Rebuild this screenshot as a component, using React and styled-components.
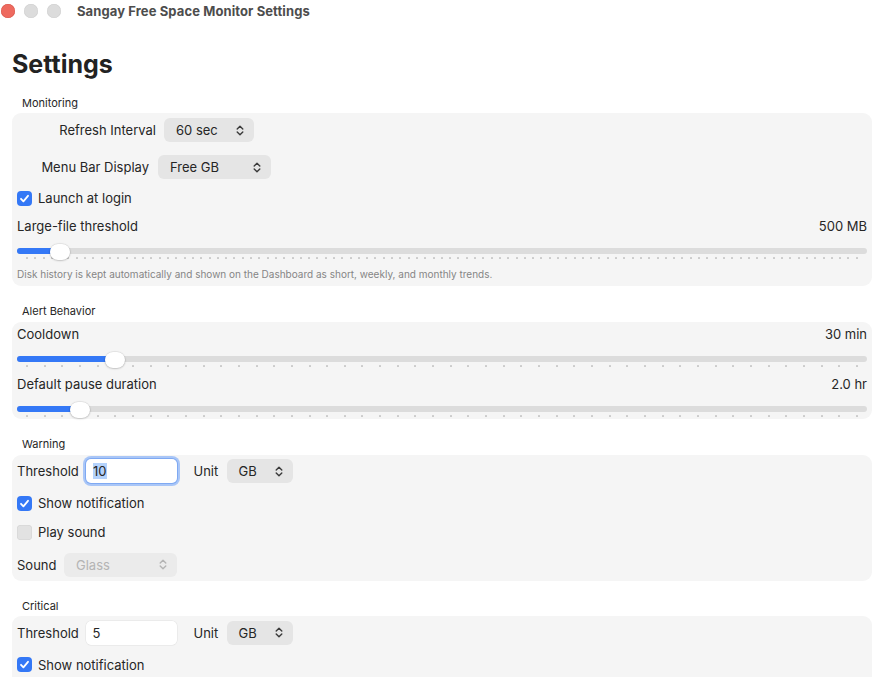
import React from "react";
import styled, { createGlobalStyle } from "styled-components";

const GlobalStyle = createGlobalStyle`
  html, body { margin: 0; padding: 0; background: #ffffff; }
  body {
    font-family: Inter, "Noto Sans", "Liberation Sans", sans-serif;
    color: #262626;
    -webkit-font-smoothing: antialiased;
  }
  * { box-sizing: border-box; }
`;

const Window = styled.div`
  width: 887px;
  height: 677px;
  overflow: hidden;
  background: #ffffff;
  display: flex;
  flex-direction: column;
`;

const TitleBar = styled.div`
  height: 22px;
  flex-shrink: 0;
  display: flex;
  align-items: center;
  padding-left: 1px;
`;

const Lights = styled.div`
  display: flex;
  gap: 9px;
  margin-right: 16px;
`;

const Light = styled.span`
  width: 14px;
  height: 14px;
  border-radius: 50%;
  background: ${(p) => p.$color};
  box-shadow: inset 0 0 0 0.5px ${(p) => p.$edge};
`;

const WindowTitle = styled.div`
  font-size: 13px;
  line-height: 16px;
  font-weight: 700;
  color: #4d4d4d;
  letter-spacing: 0.1px;
`;

const Content = styled.div`
  padding: 0 15px 0 12px;
  display: flex;
  flex-direction: column;
  flex-shrink: 0;
`;

const Heading = styled.h1`
  margin: 26px 0 16.5px;
  font-size: 25px;
  line-height: 32px;
  font-weight: 700;
  color: #222;
`;

const Section = styled.section`
  display: flex;
  flex-direction: column;
  margin-top: ${(p) => (p.$first ? 0 : 19)}px;
`;

const SectionLabel = styled.div`
  font-size: 11px;
  line-height: 13px;
  padding-left: 10px;
  margin-bottom: 3.5px;
  color: #262626;
`;

const Card = styled.div`
  background: #f5f5f5;
  border-radius: 9px;
  padding: ${(p) => p.$pad};
  display: flex;
  flex-direction: column;
`;

const Row = styled.div`
  display: flex;
  align-items: center;
  height: ${(p) => p.$h || 24}px;
  margin-top: ${(p) => p.$mt || 0}px;
  flex-shrink: 0;
`;

const SpreadRow = styled(Row)`
  justify-content: space-between;
`;

const Label = styled.span`
  font-size: 13px;
  line-height: 16px;
  white-space: nowrap;
  color: #262626;
  width: ${(p) => (p.$w ? `${p.$w}px` : "auto")};
  text-align: ${(p) => p.$align || "left"};
  margin-left: ${(p) => p.$ml || 0}px;
  margin-right: ${(p) => p.$mr || 0}px;
  flex-shrink: 0;
`;

const SelectBox = styled.div`
  width: ${(p) => p.$w}px;
  height: 24px;
  border-radius: 6px;
  background: ${(p) => (p.$disabled ? "#ebebeb" : "#e5e5e5")};
  color: ${(p) => (p.$disabled ? "#b4b4b4" : "#262626")};
  font-size: 13px;
  line-height: 16px;
  display: flex;
  align-items: center;
  justify-content: space-between;
  padding: 0 10px 0 12px;
  flex-shrink: 0;
`;

const Chevron = ({ color }) => (
  <svg width="8" height="11" viewBox="0 0 8 11" fill="none">
    <path d="M1.2 4 L4 1.2 L6.8 4" stroke={color} strokeWidth="1.4" strokeLinecap="round" strokeLinejoin="round" />
    <path d="M1.2 7 L4 9.8 L6.8 7" stroke={color} strokeWidth="1.4" strokeLinecap="round" strokeLinejoin="round" />
  </svg>
);

const Select = ({ value, width, disabled }) => (
  <SelectBox $w={width} $disabled={disabled}>
    <span>{value}</span>
    <Chevron color={disabled ? "#b4b4b4" : "#3a3a3a"} />
  </SelectBox>
);

const CheckBox = styled.span`
  width: 15px;
  height: 15px;
  border-radius: 4px;
  background: ${(p) => (p.$on ? "#3478f6" : "#e2e2e2")};
  box-shadow: ${(p) => (p.$on ? "none" : "inset 0 0 0 0.5px #d2d2d2")};
  display: flex;
  align-items: center;
  justify-content: center;
  margin-right: 6px;
  flex-shrink: 0;
`;

const Check = ({ on, label, mt }) => (
  <Row $h={20} $mt={mt}>
    <CheckBox $on={on}>
      {on && (
        <svg width="11" height="11" viewBox="0 0 11 11" fill="none">
          <path d="M2 5.8 L4.4 8.3 L9 2.8" stroke="#fff" strokeWidth="1.8" strokeLinecap="round" strokeLinejoin="round" />
        </svg>
      )}
    </CheckBox>
    <Label>{label}</Label>
  </Row>
);

const SliderWrap = styled.div`
  position: relative;
  height: 18px;
  margin-top: ${(p) => p.$mt || 0}px;
  flex-shrink: 0;
`;

const Track = styled.div`
  position: relative;
  margin-top: 5.5px;
  height: 6px;
  border-radius: 3px;
  background: #dcdcdc;
`;

const Fill = styled.div`
  position: absolute;
  left: 0;
  top: 0;
  bottom: 0;
  border-radius: 3px;
  background: #3478f6;
`;

const Ticks = styled.div`
  display: flex;
  justify-content: space-between;
  padding: 0 9px;
  margin-top: 3.5px;
`;

const Tick = styled.span`
  width: 2px;
  height: 2px;
  background: #cbcbcb;
  border-radius: 0.5px;
`;

const Thumb = styled.div`
  position: absolute;
  top: 1.5px;
  width: 20px;
  height: 16px;
  border-radius: 8px;
  background: #ffffff;
  box-shadow: 0 0.5px 2px rgba(0, 0, 0, 0.28), 0 0 0 0.5px rgba(0, 0, 0, 0.06);
`;

const Slider = ({ index, steps, mt }) => {
  const frac = index / steps;
  return (
    <SliderWrap $mt={mt}>
      <Track>
        <Fill style={{ width: `calc((100% - 20px) * ${frac} + 10px)` }} />
      </Track>
      <Ticks>
        {Array.from({ length: steps + 1 }, (_, i) => (
          <Tick key={i} />
        ))}
      </Ticks>
      <Thumb style={{ left: `calc((100% - 20px) * ${frac})` }} />
    </SliderWrap>
  );
};

const Caption = styled.div`
  font-size: 10px;
  line-height: 12px;
  color: #858585;
  margin-top: 8px;
`;

const Field = styled.div`
  width: 91px;
  height: 24px;
  border-radius: 5px;
  background: #ffffff;
  font-size: 13px;
  line-height: 16px;
  display: flex;
  align-items: center;
  padding-left: 7px;
  flex-shrink: 0;
  box-shadow: ${(p) =>
    p.$focused
      ? "0 0 0 1px #7fa9f2, 0 0 0 3px #a9c6f7"
      : "0 0 0 0.5px #e2e2e2"};
`;

const Selected = styled.span`
  background: #b4d2fb;
  padding: 0 0.5px;
`;

const ThresholdRow = ({ value, focused, mt }) => (
  <Row $h={24} $mt={mt}>
    <Label $w={61} $mr={7.5}>Threshold</Label>
    <Field $focused={focused}>{focused ? <Selected>{value}</Selected> : value}</Field>
    <Label $ml={17} $w={25} $mr={8}>Unit</Label>
    <Select value="GB" width={66} />
  </Row>
);

export default function App() {
  return (
    <Window>
      <GlobalStyle />
      <TitleBar>
        <Lights>
          <Light $color="#ee6a5f" $edge="#d8574b" />
          <Light $color="#dcdcdc" $edge="#d0d0d0" />
          <Light $color="#dcdcdc" $edge="#d0d0d0" />
        </Lights>
        <WindowTitle>Sangay Free Space Monitor Settings</WindowTitle>
      </TitleBar>
      <Content>
        <Heading>Settings</Heading>

        <Section $first>
          <SectionLabel>Monitoring</SectionLabel>
          <Card $pad="5px 5px 6px">
            <Row>
              <Label $w={139} $align="right" $mr={8}>Refresh Interval</Label>
              <Select value="60 sec" width={90} />
            </Row>
            <Row $mt={13}>
              <Label $w={132} $align="right" $mr={9}>Menu Bar Display</Label>
              <Select value="Free GB" width={113} />
            </Row>
            <Check on label="Launch at login" mt={9} />
            <SpreadRow $h={16} $mt={10}>
              <Label>Large-file threshold</Label>
              <Label>500 MB</Label>
            </SpreadRow>
            <Slider index={4} steps={100} mt={8} />
            <Caption>
              Disk history is kept automatically and shown on the Dashboard as short, weekly, and monthly trends.
            </Caption>
          </Card>
        </Section>

        <Section>
          <SectionLabel>Alert Behavior</SectionLabel>
          <Card $pad="4.5px 5px 1px">
            <SpreadRow $h={16}>
              <Label>Cooldown</Label>
              <Label>30 min</Label>
            </SpreadRow>
            <Slider index={5} steps={47} mt={8} />
            <SpreadRow $h={16} $mt={8}>
              <Label>Default pause duration</Label>
              <Label>2.0 hr</Label>
            </SpreadRow>
            <Slider index={3} steps={47} mt={8} />
          </Card>
        </Section>

        <Section>
          <SectionLabel>Warning</SectionLabel>
          <Card $pad="4.5px 5px 4px">
            <ThresholdRow value="10" focused />
            <Check on label="Show notification" mt={10} />
            <Check on={false} label="Play sound" mt={9} />
            <Row $mt={10.5}>
              <Label $w={39} $mr={8}>Sound</Label>
              <Select value="Glass" width={113} disabled />
            </Row>
          </Card>
        </Section>

        <Section>
          <SectionLabel>Critical</SectionLabel>
          <Card $pad="4.5px 5px 40px">
            <ThresholdRow value="5" />
            <Check on label="Show notification" mt={10} />
          </Card>
        </Section>
      </Content>
    </Window>
  );
}
